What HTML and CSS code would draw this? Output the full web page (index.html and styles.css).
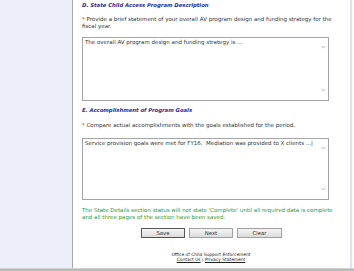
FILE: index.html
```html
<!DOCTYPE html>
<html>
<head>
<meta charset="utf-8">
<link rel="stylesheet" href="styles.css">
</head>
<body>
<div class="page">
  <div class="sidebar"></div>
  <div class="main">
    <h2 class="sec-title">D. State Child Access Program Description</h2>
    <p class="prompt"><span class="req">*</span> Provide a brief statement of your overall AV program design and funding strategy for the fiscal year.</p>
    <div class="tbox tbox-d">
      <div class="tbox-text">The overall AV program design and funding strategy is ...</div>
      <div class="scroll">
        <svg class="arr" width="5" height="4" viewBox="0 0 5 4"><path d="M0.5 3.2 L2.5 1 L4.5 3.2" fill="none" stroke="#b4b4b4" stroke-width="0.9"/></svg>
        <svg class="arr" width="5" height="4" viewBox="0 0 5 4"><path d="M0.5 0.8 L2.5 3 L4.5 0.8" fill="none" stroke="#b4b4b4" stroke-width="0.9"/></svg>
      </div>
    </div>
    <h2 class="sec-title sec-e">E. Accomplishment of Program Goals</h2>
    <p class="prompt prompt-e"><span class="req">*</span> Compare actual accomplishments with the goals established for the period.</p>
    <div class="tbox tbox-e">
      <div class="tbox-text">Service provision goals were met for FY16.&nbsp; Mediation was provided to X clients ...|</div>
      <div class="scroll">
        <svg class="arr" width="5" height="4" viewBox="0 0 5 4"><path d="M0.5 3.2 L2.5 1 L4.5 3.2" fill="none" stroke="#b4b4b4" stroke-width="0.9"/></svg>
        <svg class="arr" width="5" height="4" viewBox="0 0 5 4"><path d="M0.5 0.8 L2.5 3 L4.5 0.8" fill="none" stroke="#b4b4b4" stroke-width="0.9"/></svg>
      </div>
    </div>
    <p class="note">The State Details section status will not state 'Complete' until all required data is complete and all three pages of the section have been saved.</p>
    <div class="buttons">
      <button class="btn btn-default">Save</button>
      <button class="btn">Next</button>
      <button class="btn btn-wide">Clear</button>
    </div>
    <div class="footer">
      <div>Office of Child Support Enforcement</div>
      <div><a href="#">Contact Us</a> | <a href="#">Privacy Statement</a></div>
    </div>
  </div>
  <div class="rstrip"></div>
</div>
<div class="bottom"></div>
</body>
</html>
```
FILE: styles.css
```css
html, body {
  margin: 0;
  padding: 0;
  background: #eceef9;
  font-family: "DejaVu Sans", Verdana, sans-serif;
  color: #333;
}
.page {
  display: flex;
  height: 268px;
  overflow: hidden;
}
.sidebar {
  width: 72px;
  flex: none;
  background: #eceef9;
  border-right: 1px solid #a9a9a9;
}
.main {
  width: 258px;
  flex: none;
  background: #fff;
  padding: 2px 10px 0 9px;
  border-right: 2px solid #dfe1f3;
  font-size: 5.5px;
  line-height: 7px;
}
.rstrip {
  flex: 1;
  background: #fafaff;
}
.sec-title {
  margin: 0;
  font-size: 5.3px;
  line-height: 7px;
  font-weight: bold;
  font-style: italic;
  color: #2b2b8f;
}
.prompt {
  margin: 7px 0 0;
}
.req {
  color: #e0261c;
}
.tbox {
  margin-top: 7px;
  width: 247px;
  border: 1px solid #a5a5a5;
  background: #fff;
  display: flex;
  justify-content: space-between;
  box-sizing: border-box;
}
.tbox-d { height: 64px; }
.tbox-e { height: 62px; }
.tbox-text {
  padding: 1px 2px;
  font-size: 5.5px;
  line-height: 7px;
}
.scroll {
  width: 9px;
  flex: none;
  display: flex;
  flex-direction: column;
  justify-content: space-between;
  align-items: center;
  padding: 7px 0 8px;
}
.arr {
  display: block;
}
.sec-e { margin-top: 6px; }
.prompt-e { margin-top: 7.5px; }
.tbox-e { margin-top: 9.5px; }
.note {
  margin: 6.5px 0 0;
  color: #2e9a2e;
}
.buttons {
  display: flex;
  gap: 4px;
  margin: 7.5px 0 0 59px;
}
.btn {
  font-family: inherit;
  font-size: 5.3px;
  line-height: 6px;
  height: 10px;
  width: 44px;
  padding: 0;
  border: 1px solid #a0a0a0;
  background: linear-gradient(#f4f4f4, #dcdcdc);
  color: #333;
}
.btn-wide { width: 45px; }
.btn-default {
  border-color: #555;
}
.footer {
  margin-top: 13.5px;
  text-align: center;
  font-size: 4.4px;
  line-height: 5px;
  color: #222;
}
.footer a {
  color: #222;
}
.bottom {
  height: 2px;
  background: #b9b9b9;
  border-top: 1px solid #d0d0d0;
}
```
